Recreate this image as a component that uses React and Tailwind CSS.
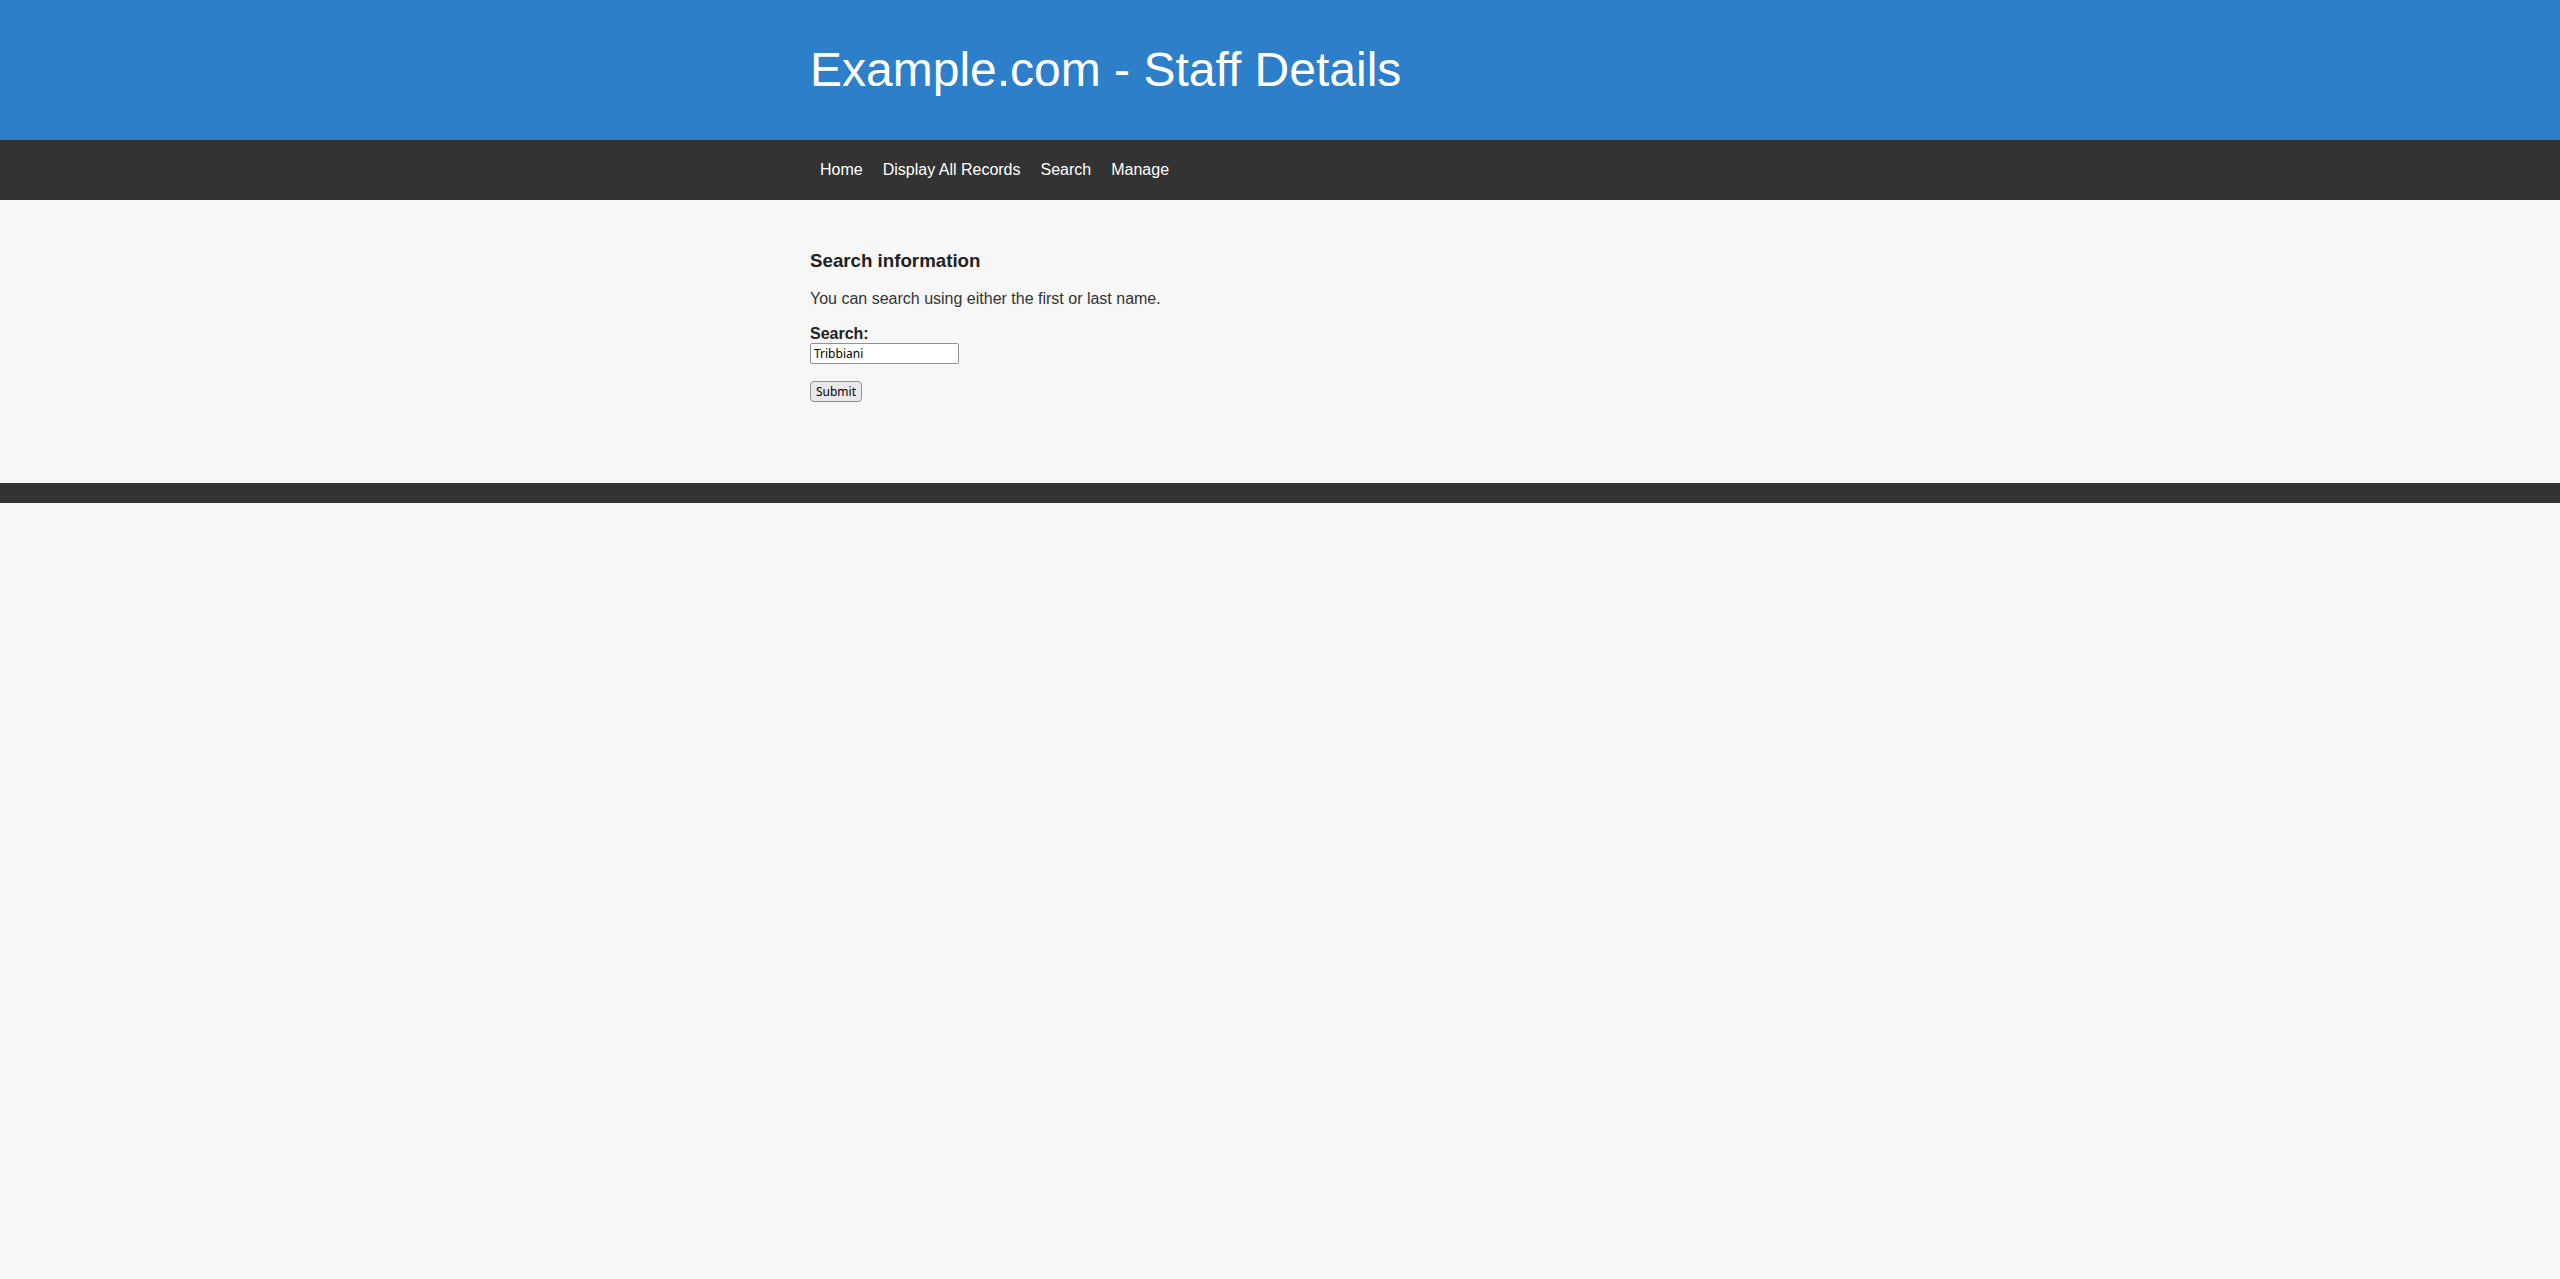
import { useState } from "react";

const NAV_LINKS = ["Home", "Display All Records", "Search", "Manage"];

export default function App() {
  const [query, setQuery] = useState("Tribbiani");

  return (
    <div className="min-h-screen bg-[#f7f7f7] font-['Liberation_Sans',Arial,sans-serif] text-[#333]">
      <header className="h-[140px] bg-[#2d7fc9]">
        <div className="mx-auto flex h-full w-[940px] items-center">
          <h1 className="text-[48px] font-normal leading-none text-white">
            Example.com - Staff Details
          </h1>
        </div>
      </header>

      <nav className="h-[60px] bg-[#333333]">
        <ul className="mx-auto flex h-full w-[940px] items-center">
          {NAV_LINKS.map((label) => (
            <li key={label}>
              <a href="#" className="px-[10px] text-[16px] leading-[1.15] text-white">
                {label}
              </a>
            </li>
          ))}
        </ul>
      </nav>

      <main className="mx-auto w-[940px] pb-[81px] pt-[50px]">
        <h3 className="text-[18.72px] font-bold leading-[1.15] text-[#222]">
          Search information
        </h3>
        <p className="mt-[18.7px] text-[16px] leading-[1.15]">
          You can search using either the first or last name.
        </p>

        <form className="mt-[16px]" onSubmit={(e) => e.preventDefault()}>
          <label htmlFor="search" className="block text-[16px] font-bold leading-[1.15] text-[#222]">
            Search:
          </label>
          <input
            id="search"
            type="text"
            value={query}
            onChange={(e) => setQuery(e.target.value)}
            className="block h-[21.4px] w-[149px] rounded-[2px] border border-[#8f8f9d] bg-white px-[3px] font-['Noto_Sans',sans-serif] text-[12px] text-black outline-none"
          />
          <button
            type="submit"
            className="mt-[16.5px] block h-[21.4px] w-[52px] rounded-[4px] border border-[#8f8f9d] bg-[#e9e9ed] font-['Noto_Sans',sans-serif] text-[12px] leading-none text-black"
          >
            Submit
          </button>
        </form>
      </main>

      <footer className="h-[20px] bg-[#333333]" />
    </div>
  );
}
